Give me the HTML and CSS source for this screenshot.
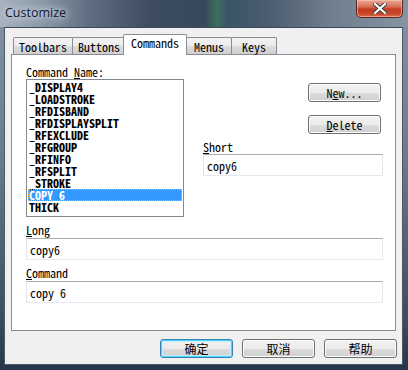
FILE: index.html
```html
<!DOCTYPE html>
<html lang="en">
<head>
    <meta charset="UTF-8">
    <title>Customize</title>
    <link rel="stylesheet" href="styles.css">
</head>
<body>
    <div class="window">
        <div class="title-bar">
            <span class="title">Customize</span>
            <button class="close-button" title="Close">
                <svg width="14" height="11" viewBox="0 0 14 11">
                    <path d="M2 1 L12 10 M12 1 L2 10" stroke="#3a3a3a" stroke-width="4" stroke-linecap="square"/>
                    <path d="M2 1 L12 10 M12 1 L2 10" stroke="#ffffff" stroke-width="2.2" stroke-linecap="square"/>
                </svg>
            </button>
        </div>
        <div class="client">
            <div class="tabs">
                <div class="tab">Toolbars</div>
                <div class="tab">Buttons</div>
                <div class="tab active">Commands</div>
                <div class="tab">Menus</div>
                <div class="tab">Keys</div>
            </div>
            <div class="tab-panel">
                <div class="command-top">
                    <div class="name-col">
                        <div class="label">Command <u>N</u>ame:</div>
                        <div class="list-box">
                            <div class="list-item">_DISPLAY4</div>
                            <div class="list-item">_LOADSTROKE</div>
                            <div class="list-item">_RFDISBAND</div>
                            <div class="list-item">_RFDISPLAYSPLIT</div>
                            <div class="list-item">_RFEXCLUDE</div>
                            <div class="list-item">_RFGROUP</div>
                            <div class="list-item">_RFINFO</div>
                            <div class="list-item">_RFSPLIT</div>
                            <div class="list-item">_STROKE</div>
                            <div class="list-item selected">COPY 6</div>
                            <div class="list-item">THICK</div>
                        </div>
                    </div>
                    <div class="side-col">
                        <button class="btn side-btn">N<u>e</u>w...</button>
                        <button class="btn side-btn"><u>D</u>elete</button>
                        <div class="field short-field">
                            <div class="label"><u>S</u>hort</div>
                            <input class="text-input" type="text" value="copy6">
                        </div>
                    </div>
                </div>
                <div class="field">
                    <div class="label"><u>L</u>ong</div>
                    <input class="text-input" type="text" value="copy6">
                </div>
                <div class="field">
                    <div class="label"><u>C</u>ommand</div>
                    <input class="text-input" type="text" value="copy 6">
                </div>
            </div>
            <div class="dialog-buttons">
                <button class="btn cjk default">确定</button>
                <button class="btn cjk">取消</button>
                <button class="btn cjk">帮助</button>
            </div>
        </div>
    </div>
</body>
</html>
```

FILE: styles.css
```css
body {
    margin: 0;
    padding: 0;
    font-family: "Noto Sans Mono CJK SC", "Liberation Mono", monospace;
    font-size: 12px;
    color: #000;
}
.window {
    width: 408px;
    height: 370px;
    display: flex;
    flex-direction: column;
    background: linear-gradient(180deg, #8593a1 0, #6d7d8d 40%, #3e4e60 85%, #26364a 100%);
}
.title-bar {
    height: 27px;
    display: flex;
    justify-content: space-between;
    align-items: flex-start;
    background: linear-gradient(90deg, #a7b3bf 0, #8c9aa8 40px, #5e6e80 90px, #3d4d5f 150px, #36485a 205px, #3f6e5c 217px, #3b5466 228px, #4c5d70 270px, #6e7e8e 330px, #8594a3 408px);
}
.title {
    font-family: "Open Sans", "DejaVu Sans", sans-serif;
    font-size: 12.5px;
    color: #10163a;
    margin: 4px 0 0 5px;
    text-shadow: 0 0 6px #e6ecf2, 0 0 10px #dfe6ee;
}
.close-button {
    width: 47px;
    height: 18px;
    margin-right: 5px;
    padding: 0;
    border: 1px solid #5a2a24;
    border-top: none;
    border-radius: 0 0 5px 5px;
    background: linear-gradient(180deg, #e8a796 0, #d9785f 35%, #c23c20 55%, #c8452a 80%, #e07050 100%);
    box-shadow: inset 0 0 0 1px rgba(255, 210, 190, 0.5);
    display: flex;
    justify-content: center;
    align-items: center;
}
.client {
    flex: 1;
    margin: 0 5px 5px 4px;
    background-color: #f0f0f0;
    border: 1px solid #4a5868;
    border-top-color: #3c4858;
    padding: 6px 6px 0 6px;
    display: flex;
    flex-direction: column;
}
.tabs {
    display: flex;
    align-items: flex-end;
    height: 20px;
    padding-left: 2px;
    position: relative;
    z-index: 1;
}
.tab {
    height: 17px;
    min-width: 46px;
    padding: 0 5px;
    box-sizing: border-box;
    border: 1px solid #898c95;
    border-bottom: none;
    border-radius: 2px 2px 0 0;
    background: linear-gradient(180deg, #f3f3f3 0, #ebebeb 50%, #dddddd 51%, #cfcfcf 100%);
    text-align: center;
    line-height: 17px;
    white-space: nowrap;
    margin-right: -1px;
}
.tab.active {
    height: 21px;
    margin: 0 0 -1px -2px;
    padding: 0 7px;
    background: #ffffff;
    line-height: 16px;
    position: relative;
    z-index: 2;
}
.tab.active + .tab {
    margin-left: -1px;
}
.tab-panel {
    height: 275px;
    border: 1px solid #898c95;
    background-color: #ffffff;
    padding: 0 12px 0 14px;
}
.label {
    height: 12px;
    line-height: 12px;
    white-space: nowrap;
    margin-bottom: 2px;
}
.label u {
    text-decoration-thickness: 1px;
}
.command-top {
    display: flex;
    margin-top: 11px;
}
.name-col {
    width: 158px;
}
.name-col .label {
    margin-bottom: 1px;
}
.list-box {
    height: 135px;
    border: 1px solid #828790;
    padding: 1px 1px 0 1px;
    overflow: hidden;
}
.list-item {
    height: 12px;
    line-height: 12px;
    padding-left: 1px;
    font-weight: bold;
    white-space: nowrap;
}
.list-item.selected {
    background-color: #3399ff;
    color: #ffffff;
    outline: 1px dotted #f3b35a;
    outline-offset: -1px;
}
.side-col {
    flex: 1;
    margin-left: 19px;
    display: flex;
    flex-direction: column;
    align-items: flex-end;
}
.btn {
    height: 19px;
    width: 73px;
    padding: 0;
    border: 1px solid #707070;
    border-radius: 3px;
    background: linear-gradient(180deg, #f2f2f2 0, #ebebeb 50%, #dddddd 51%, #cfcfcf 100%);
    box-shadow: inset 0 0 0 1px #fcfcfc;
    font-family: "Noto Sans Mono CJK SC", "Liberation Mono", monospace;
    font-size: 12px;
    line-height: 16px;
    color: #000;
}
.side-btn {
    margin-right: 2px;
}
.side-btn:first-child {
    margin-top: 17px;
}
.side-btn + .side-btn {
    margin-top: 13px;
}
.short-field {
    margin-top: auto;
    align-self: stretch;
}
.field {
    margin-top: 7px;
}
.short-field .label {
    margin-bottom: 1px;
}
.text-input {
    display: block;
    width: 100%;
    height: 22px;
    box-sizing: border-box;
    border: 1px solid #e3e9ef;
    border-top-color: #abadb3;
    border-left-color: #e2e3ea;
    padding: 0 3px;
    font-family: "Noto Sans Mono CJK SC", "Liberation Mono", monospace;
    font-size: 12px;
    outline: none;
    background: #ffffff;
}
.dialog-buttons {
    display: flex;
    justify-content: flex-end;
    gap: 9px;
    margin: 8px -1px 0 0;
}
.btn.cjk {
    font-family: "Noto Sans CJK SC", sans-serif;
}
.btn.default {
    border-color: #3c7fb1;
    box-shadow: inset 0 0 0 1px #48d8ff, inset 0 0 0 2px #c8eefc;
}
```
